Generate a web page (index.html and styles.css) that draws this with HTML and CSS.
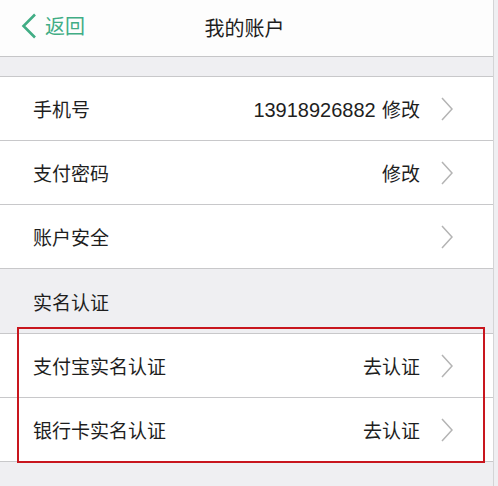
FILE: index.html
```html
<!DOCTYPE html>
<html lang="zh">
<head>
<meta charset="utf-8">
<link rel="stylesheet" href="styles.css">
</head>
<body>
<div class="page">
  <header class="nav">
    <div class="back">
      <svg class="back-icon" width="16" height="26" viewBox="0 0 16 26"><path d="M14 1.5 L2.5 13 L14 24.5" fill="none" stroke="#41ad85" stroke-width="2.6"/></svg>
      <span>返回</span>
    </div>
    <div class="title">我的账户</div>
  </header>
  <div class="spacer"></div>
  <div class="group">
    <div class="row"><span class="label">手机号</span><span class="value"><span class="num">13918926882</span> 修改</span><svg class="chev" width="12" height="24" viewBox="0 0 12 24"><path d="M1 1 L11 12 L1 23" fill="none" stroke="#b4b4b4" stroke-width="1.5"/></svg></div>
    <div class="row"><span class="label">支付密码</span><span class="value">修改</span><svg class="chev" width="12" height="24" viewBox="0 0 12 24"><path d="M1 1 L11 12 L1 23" fill="none" stroke="#b4b4b4" stroke-width="1.5"/></svg></div>
    <div class="row"><span class="label">账户安全</span><span class="value"></span><svg class="chev" width="12" height="24" viewBox="0 0 12 24"><path d="M1 1 L11 12 L1 23" fill="none" stroke="#b4b4b4" stroke-width="1.5"/></svg></div>
  </div>
  <div class="section-title">实名认证</div>
  <div class="group">
    <div class="row"><span class="label">支付宝实名认证</span><span class="value">去认证</span><svg class="chev" width="12" height="24" viewBox="0 0 12 24"><path d="M1 1 L11 12 L1 23" fill="none" stroke="#b4b4b4" stroke-width="1.5"/></svg></div>
    <div class="row"><span class="label">银行卡实名认证</span><span class="value">去认证</span><svg class="chev" width="12" height="24" viewBox="0 0 12 24"><path d="M1 1 L11 12 L1 23" fill="none" stroke="#b4b4b4" stroke-width="1.5"/></svg></div>
  </div>
  <div class="highlight"></div>
</div>
</body>
</html>
```
FILE: styles.css
```css
html, body {
  margin: 0;
  padding: 0;
  background: #efeff2;
}
body {
  font-family: "Noto Sans CJK SC", "Liberation Sans", sans-serif;
  color: #1e1e1e;
  height: 486px;
  overflow: hidden;
}
.page {
  position: relative;
  width: 493px;
  height: 486px;
  border-right: 1px solid #d4d4d6;
  background: #efeff2;
}
.nav {
  position: relative;
  height: 56px;
  background: #fdfdfd;
  border-bottom: 1px solid #c6c6c8;
  display: flex;
  align-items: center;
  justify-content: center;
}
.back {
  position: absolute;
  left: 21px;
  top: 13px;
  display: flex;
  align-items: center;
  gap: 8px;
  color: #41ad85;
  font-size: 20px;
  line-height: 26px;
}
.title {
  font-size: 20px;
  line-height: 26px;
  margin-left: -4px;
}
.spacer {
  height: 19px;
}
.group {
  background: #fff;
  border-top: 1px solid #c8c8ca;
  border-bottom: 1px solid #c8c8ca;
}
.row {
  height: 63px;
  display: flex;
  align-items: center;
  padding: 0 40px 0 33px;
  font-size: 19px;
}
.row + .row {
  border-top: 1px solid #c8c8ca;
}
.label {
  flex: 1;
}
.value {
  margin-right: 21px;
}
.num {
  font-family: "Liberation Sans", sans-serif;
  font-size: 20px;
  margin-right: 2px;
}
.chev {
  display: block;
}
.section-title {
  height: 64px;
  display: flex;
  align-items: center;
  padding-left: 33px;
  font-size: 19px;
}
.highlight {
  position: absolute;
  left: 17px;
  top: 327px;
  width: 464px;
  height: 132px;
  border: 2px solid #c8161e;
}
```
